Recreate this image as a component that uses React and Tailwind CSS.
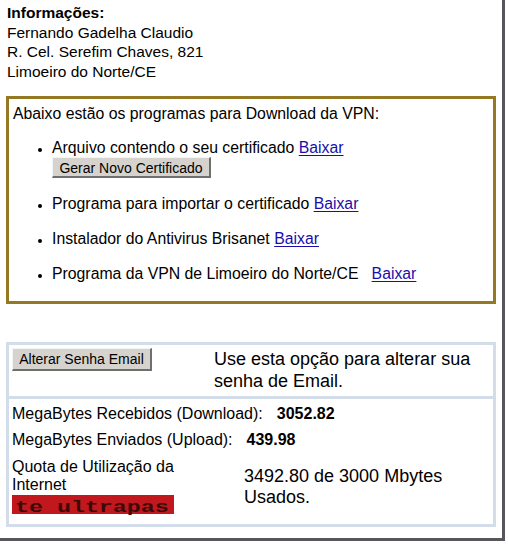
import React from 'react';

const links = [
  'Programa para importar o certificado',
  'Instalador do Antivirus Brisanet',
];

function Baixar() {
  return <a href="#" className="text-[#1a0dab] underline underline-offset-2">Baixar</a>;
}

function Button({ children, className = '' }) {
  return (
    <button
      className={`bg-[#d6d3ce] text-[14px] text-black leading-none border-r-2 border-b-2 border-[#6f6f6f] border-t border-l border-t-[#f4f4f4] border-l-[#f4f4f4] ${className}`}
    >
      {children}
    </button>
  );
}

export default function App() {
  return (
    <div className="w-[508px] h-[545px] bg-white font-['Liberation_Sans',Arial,sans-serif] text-black overflow-hidden">
      <div className="w-[505px] h-[541px] border-r-[3px] border-b-[3px] border-[#55575c] pl-[6px] pt-[3px]">
        <div className="text-[15.5px] leading-[19.5px] pl-[1px]">
          <div className="font-bold">Informações:</div>
          <div>Fernando Gadelha Claudio</div>
          <div>R. Cel. Serefim Chaves, 821</div>
          <div>Limoeiro do Norte/CE</div>
        </div>

        <div className="mt-[15px] w-[490px] h-[208px] border-[3px] border-[#957823] px-[4px] pt-[5px] text-[15.8px] leading-[19px]">
          <div>Abaixo estão os programas para Download da VPN:</div>
          <ul className="mt-[15px] pl-[39px] list-disc space-y-[16px] marker:text-[12px]">
            <li>
              <div>Arquivo contendo o seu certificado <Baixar /></div>
              <Button className="w-[159px] h-[21px] pt-[1px]">Gerar Novo Certificado</Button>
            </li>
            {links.map((t) => (
              <li key={t}>
                {t} <Baixar />
              </li>
            ))}
            <li>
              Programa da VPN de Limoeiro do Norte/CE&nbsp;&nbsp;&nbsp;<Baixar />
            </li>
          </ul>
        </div>

        <div className="mt-[38px] w-[490px] border-[3px] border-[#d3dde9]">
          <div className="flex h-[51px] pl-[3px] pt-[2px]">
            <div className="w-[202px]">
              <Button className="w-[140px] h-[23px]">Alterar Senha Email</Button>
            </div>
            <div className="text-[18px] leading-[22px] pt-[1px]">
              Use esta opção para alterar sua<br />senha de Email.
            </div>
          </div>
          <div className="h-[3px] bg-[#d3dde9]"></div>
          <div className="pl-[3px] pt-[2px] pb-[10px] text-[16px]">
            <div className="flex items-center h-[26px]">
              <span>MegaBytes Recebidos (Download):</span>
              <span className="ml-[14px] font-bold">3052.82</span>
            </div>
            <div className="flex items-center h-[26px]">
              <span>MegaBytes Enviados (Upload):</span>
              <span className="ml-[14px] font-bold">439.98</span>
            </div>
            <div className="flex mt-[5px]">
              <div className="w-[232px]">
                <div className="leading-[18px]">Quota de Utilização da<br />Internet</div>
                <div className="mt-[1px] w-[162px] h-[19px] bg-[#c0181c] pl-[3px] whitespace-nowrap">
                  <span className="inline-block origin-left scale-x-[1.37] font-['Liberation_Mono',monospace] font-bold text-[17px] leading-[19px] text-[#3d0808]">
                    te ultrapas
                  </span>
                </div>
              </div>
              <div className="text-[18px] leading-[21px] pt-[8px]">
                3492.80 de 3000 Mbytes<br />Usados.
              </div>
            </div>
          </div>
        </div>
      </div>
    </div>
  );
}
